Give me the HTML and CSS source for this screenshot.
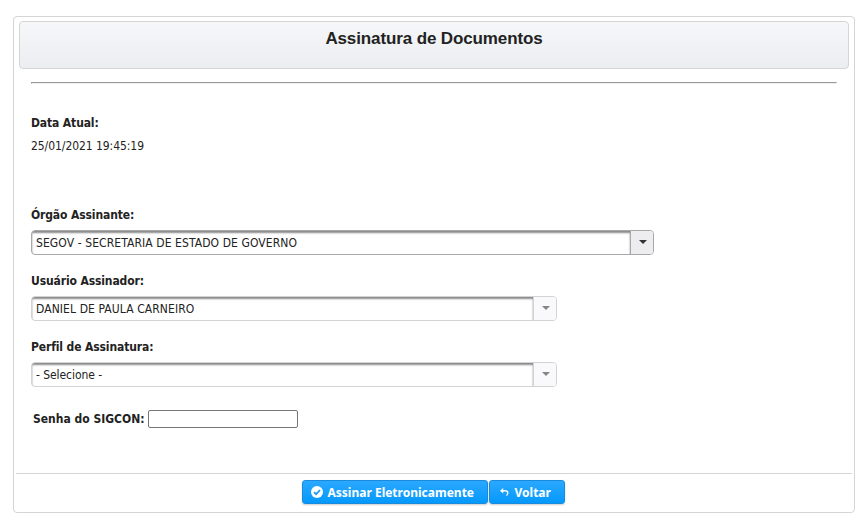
FILE: index.html
```html
<!DOCTYPE html>
<html lang="pt-BR">
<head>
<meta charset="utf-8">
<title>Assinatura de Documentos</title>
<link rel="stylesheet" href="styles.css">
</head>
<body>
<main class="panel">
  <header class="panel-header"><h1>Assinatura de Documentos</h1></header>
  <form class="content">
    <hr>
    <section class="date">
      <div class="label">Data Atual:</div>
      <div class="value">25/01/2021 19:45:19</div>
    </section>
    <section class="field">
      <div class="label">Órgão Assinante:</div>
      <div class="select wide"><div class="select-text">SEGOV - SECRETARIA DE ESTADO DE GOVERNO</div><div class="trigger"><svg width="8" height="4" viewBox="0 0 8 4"><path d="M0 0h8L4 4z"/></svg></div></div>
    </section>
    <section class="field">
      <div class="label">Usuário Assinador:</div>
      <div class="select disabled"><div class="select-text">DANIEL DE PAULA CARNEIRO</div><div class="trigger"><svg width="8" height="4" viewBox="0 0 8 4"><path d="M0 0h8L4 4z"/></svg></div></div>
    </section>
    <section class="field">
      <div class="label">Perfil de Assinatura:</div>
      <div class="select disabled"><div class="select-text placeholder">- Selecione -</div><div class="trigger"><svg width="8" height="4" viewBox="0 0 8 4"><path d="M0 0h8L4 4z"/></svg></div></div>
    </section>
    <div class="password">
      <label class="label" for="senha">Senha do SIGCON:</label>
      <input id="senha" type="password">
    </div>
  </form>
  <footer class="actions">
    <button class="btn sign" type="button"><svg width="12" height="12" viewBox="0 0 12 12"><circle cx="6" cy="6" r="6" fill="#fff"/><path d="M3 6.1l2.1 2.1 4-4.2" fill="none" stroke="#199bf5" stroke-width="1.7"/></svg><span>Assinar Eletronicamente</span></button>
    <button class="btn back" type="button"><svg width="9" height="8" viewBox="0 0 9 8"><path d="M3.2 0L0 2.8l3.2 2.8V3.5H5c2 0 2.6 1.2 1.6 3.1L6 7.8h1C9.6 5 8.7 2 5 2H3.2z" fill="#fff"/></svg><span>Voltar</span></button>
  </footer>
</main>
</body>
</html>
```
FILE: styles.css
```css
* { box-sizing: border-box; }
body { margin: 0; padding: 16px 9px 0 13px; background: #fff; color: #222; font: 12px/16px "DejaVu Sans Condensed", "DejaVu Sans", sans-serif; }
.panel { height: 497px; border: 1px solid #d5d5d5; border-radius: 4px; padding: 4px 2px 0; }
.panel-header { height: 48px; margin: 0 3px; border: 1px solid #d5d5d5; border-radius: 4px; background: linear-gradient(#f6f7f9, #ebedf0); text-align: center; }
h1 { margin: 6px 0 0; font: bold 17px/22px "Liberation Sans", Arial, sans-serif; letter-spacing: -0.12px; }
.content { height: 404px; padding: 13px 15px 0; }
hr { margin: 0; border: 1px inset #eee; }
.date { padding-top: 30px; height: 122px; }
.label { height: 24px; padding-top: 1px; font-weight: bold; letter-spacing: -0.12px; white-space: nowrap; }
.value, .select-text { white-space: nowrap; }
.value { letter-spacing: -0.06px; }
.field { height: 66px; }
.select { display: flex; width: 526px; height: 25px; border: 1px solid #a8a8a8; border-radius: 4px; overflow: hidden; }
.select.wide { width: 623px; }
.select-text { flex: 1; padding: 4px 4px 2px; letter-spacing: 0.09px; box-shadow: inset 0 2px 2px #8a8a8a; }
.select-text.placeholder { letter-spacing: -0.06px; }
.trigger { display: flex; align-items: center; justify-content: center; width: 23px; border-left: 1px solid #a8a8a8; background: #ededf0; }
.trigger svg { margin: -1px 0 0 1px; fill: #333; }
.select.disabled, .disabled .trigger { border-color: #d3d3d3; }
.disabled .trigger { background: #f9f9fc; }
.disabled .trigger svg { fill: #858587; }
.password { display: flex; padding: 6px 0 0 2px; }
.password .label { width: 115px; letter-spacing: 0; }
.password input { width: 150px; height: 18px; margin: 0; padding: 1px 2px; border: 1px solid #767676; border-radius: 2px; }
.actions { display: flex; justify-content: center; gap: 1px; border-top: 1px solid #d5d5d5; padding: 6px 2px 0 0; }
.btn { display: flex; align-items: center; height: 24px; padding: 0 0 0 8px; border: 1px solid #1a8bdc; border-radius: 3px; background: linear-gradient(#2ba8ff, #0499fc); color: #fff; font: bold 12px/16px "Noto Sans", sans-serif; white-space: nowrap; box-shadow: 0 1px 2px #0003; }
.btn span { padding-top: 1px; }
.sign { width: 186px; gap: 5px; }
.back { width: 76px; gap: 6px; padding-left: 10px; }
```
